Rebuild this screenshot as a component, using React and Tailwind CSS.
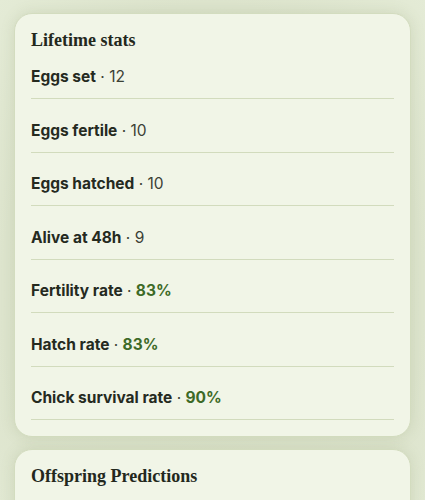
import React from 'react';

const stats = [
  { label: 'Eggs set', value: '12' },
  { label: 'Eggs fertile', value: '10' },
  { label: 'Eggs hatched', value: '10' },
  { label: 'Alive at 48h', value: '9' },
  { label: 'Fertility rate', value: '83%', rate: true },
  { label: 'Hatch rate', value: '83%', rate: true },
  { label: 'Chick survival rate', value: '90%', rate: true },
];

function Card({ title, children }) {
  return (
    <section className="rounded-[18px] border border-[#d3dcbf] bg-[#f1f5e7] px-4 pt-[14px] pb-4 shadow-[0_0_14px_rgba(120,140,90,0.18)]">
      <h2 className="text-[18px] leading-6 font-bold text-[#23281d]" style={{ fontFamily: '"Liberation Serif", "DejaVu Serif", serif' }}>
        {title}
      </h2>
      {children}
    </section>
  );
}

export default function App() {
  return (
    <div className="min-h-[500px] bg-[#dde4cd] bg-[radial-gradient(ellipse_at_center,#dae1c8_0%,#dde4cd_70%,#e4ebd6_100%)] px-[14px] pt-[13px] pb-4" style={{ fontFamily: 'Inter, "Noto Sans", sans-serif' }}>
      <div className="flex flex-col gap-[12px]">
        <Card title="Lifetime stats">
          <ul className="mt-[4px] flex flex-col gap-[10.5px]">
            {stats.map((s) => (
              <li key={s.label} className="border-b border-[#d2dbbd] py-[11px] text-[15.5px] leading-5 text-[#252a1f]">
                <span className="font-bold">{s.label}</span>
                <span className="text-[#3b4035]"> · </span>
                {s.rate ? (
                  <span className="font-bold text-[#3d6a27]">{s.value}</span>
                ) : (
                  <span className="text-[#3b4035]">{s.value}</span>
                )}
              </li>
            ))}
          </ul>
        </Card>
        <Card title="Offspring Predictions">
          <div className="h-16" />
        </Card>
      </div>
    </div>
  );
}
